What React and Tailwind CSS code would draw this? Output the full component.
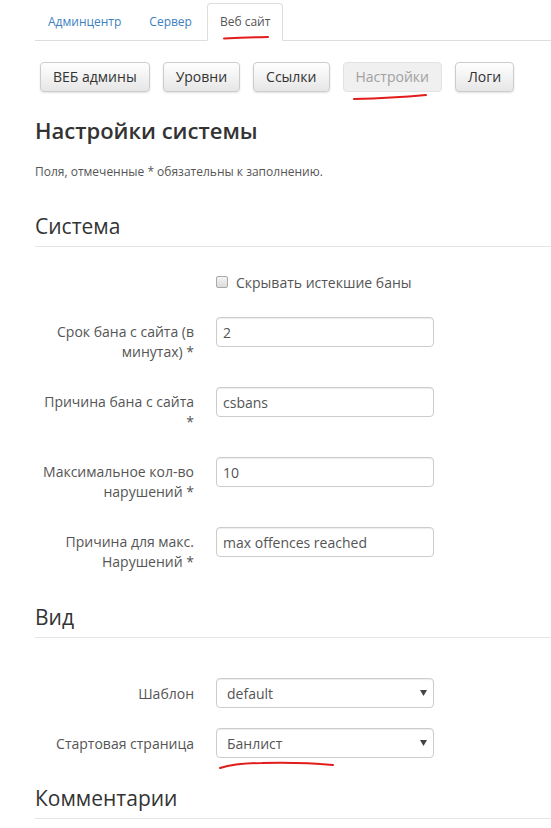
import React from 'react';

const tabs = [
    { name: 'Админцентр', active: false },
    { name: 'Сервер', active: false },
    { name: 'Веб сайт', active: true },
];

const buttons = [
    { name: 'ВЕБ админы', disabled: false },
    { name: 'Уровни', disabled: false },
    { name: 'Ссылки', disabled: false },
    { name: 'Настройки', disabled: true },
    { name: 'Логи', disabled: false },
];

const fields = [
    { label: ['Срок бана с сайта (в', 'минутах) *'], value: '2' },
    { label: ['Причина бана с сайта', '*'], value: 'csbans' },
    { label: ['Максимальное кол-во', 'нарушений *'], value: '10' },
    { label: ['Причина для макс.', 'Нарушений *'], value: 'max offences reached' },
];

const SectionTitle = ({ children, className = '' }) => (
    <div className={`text-[21px] leading-[30px] text-[#333] pb-[5px] border-b border-[#e5e5e5] ${className}`}>
        {children}
    </div>
);

const Select = ({ value }) => (
    <div className="relative w-[218px] h-[30px]">
        <select
            value={value}
            onChange={() => {}}
            className="appearance-none w-full h-full pl-[10px] pr-6 text-[14px] text-[#555] bg-white border border-[#ccc] rounded-[4px] shadow-[inset_0_1px_1px_rgba(0,0,0,0.075)] outline-none"
        >
            <option>{value}</option>
        </select>
        <svg className="absolute right-[7px] top-[12px] pointer-events-none" width="7" height="6" viewBox="0 0 7 6">
            <path d="M0 0 H7 L3.5 6 Z" fill="#444" />
        </svg>
    </div>
);

const App = () => {
    return (
        <div className="relative min-h-[828px] bg-white pl-[35px] pt-[3px] font-['Open_Sans',sans-serif] overflow-hidden">
            {/* tabs */}
            <ul className="flex border-b border-[#ddd]">
                {tabs.map((tab) => (
                    <li key={tab.name} className="-mb-px mr-[2px]">
                        <span
                            className={`block h-[38px] px-[12px] leading-[36px] text-[12px] border rounded-t-[4px] ${tab.active ? 'bg-white border-[#ddd] border-b-transparent text-[#555]' : 'border-transparent text-[#3d7fc1]'}`}
                        >
                            {tab.name}
                        </span>
                    </li>
                ))}
            </ul>

            {/* sub navigation */}
            <div className="flex gap-[13px] ml-[5px] mt-[21px]">
                {buttons.map((btn) => (
                    <button
                        key={btn.name}
                        disabled={btn.disabled}
                        className={`h-[30px] px-[12px] text-[14px] leading-none rounded-[4px] border ${btn.disabled ? 'bg-[#f0f0f0] border-[#e2e2e2] text-[#a0a0a0]' : 'bg-gradient-to-b from-white to-[#e6e6e6] border-[#ccc] text-[#333] shadow-[0_1px_2px_rgba(0,0,0,0.12)]'}`}
                    >
                        {btn.name}
                    </button>
                ))}
            </div>

            <h1 className="mt-[18px] text-[22px] leading-[40px] font-semibold text-[#333]">Настройки системы</h1>
            <p className="mt-[14px] text-[12px] leading-[16px] text-[#555]">Поля, отмеченные * обязательны к заполнению.</p>

            <SectionTitle className="mt-[31px]">Система</SectionTitle>

            <div className="mt-[25px] ml-[181px] flex items-center gap-[8px] h-[20px]">
                <span className="w-[12px] h-[12px] rounded-[2px] border border-[#a9a9a9] bg-gradient-to-b from-[#f4f4f4] to-[#dcdcdc]"></span>
                <span className="text-[14px] text-[#555]">Скрывать истекшие баны</span>
            </div>

            <div className="mt-[25px] flex flex-col gap-[25px]">
                {fields.map((f) => (
                    <div key={f.value} className="flex gap-[22px]">
                        <div className="w-[159px] pt-[5px] text-right text-[14px] leading-[20px] text-[#555]">
                            {f.label.map((line) => (
                                <div key={line}>{line}</div>
                            ))}
                        </div>
                        <input
                            value={f.value}
                            readOnly
                            className="w-[218px] h-[30px] px-[6px] text-[14px] text-[#555] border border-[#ccc] rounded-[4px] shadow-[inset_0_1px_1px_rgba(0,0,0,0.075)] outline-none"
                        />
                    </div>
                ))}
            </div>

            <SectionTitle className="mt-[30px]">Вид</SectionTitle>

            <div className="mt-[40px] flex flex-col gap-[20px]">
                <div className="flex items-center gap-[22px]">
                    <div className="w-[159px] text-right text-[14px] text-[#555]">Шаблон</div>
                    <Select value="default" />
                </div>
                <div className="flex items-center gap-[22px]">
                    <div className="w-[159px] text-right text-[14px] text-[#555]">Стартовая страница</div>
                    <Select value="Банлист" />
                </div>
            </div>

            <SectionTitle className="mt-[25px]">Комментарии</SectionTitle>

            {/* red hand-drawn marks */}
            <svg className="absolute left-0 top-0 pointer-events-none" width="551" height="828">
                <path d="M224 38.5 Q246 37.5 268 37" stroke="#e21b1b" strokeWidth="2" fill="none" strokeLinecap="round" />
                <path d="M354 99 Q392 98 426 95" stroke="#e21b1b" strokeWidth="2" fill="none" strokeLinecap="round" />
                <path d="M220 768 Q236 763 262 763 Q300 762 333 765" stroke="#e21b1b" strokeWidth="2" fill="none" strokeLinecap="round" />
            </svg>
        </div>
    );
};

export default App;
